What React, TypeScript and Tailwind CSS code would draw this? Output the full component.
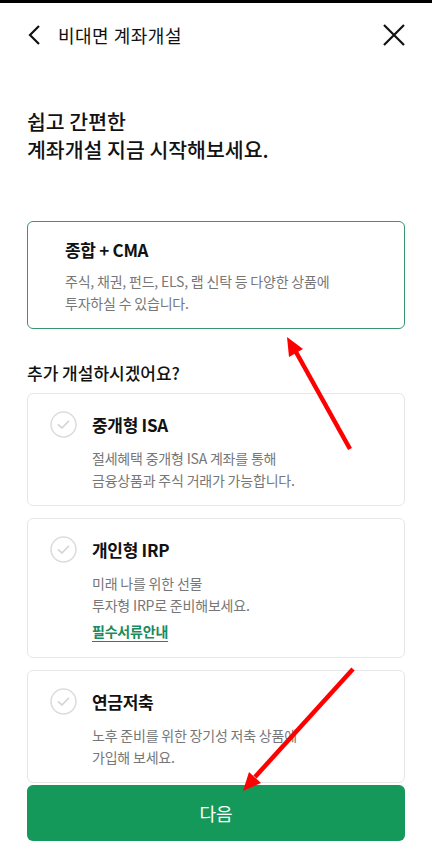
import { useState } from "react";

type Product = {
  title: string;
  desc: string[];
  link?: string;
};

const extras: Product[] = [
  {
    title: "중개형 ISA",
    desc: ["절세혜택 중개형 ISA 계좌를 통해", "금융상품과 주식 거래가 가능합니다."],
  },
  {
    title: "개인형 IRP",
    desc: ["미래 나를 위한 선물", "투자형 IRP로 준비해보세요."],
    link: "필수서류안내",
  },
  {
    title: "연금저축",
    desc: ["노후 준비를 위한 장기성 저축 상품에", "가입해 보세요."],
  },
];

function CheckCircle({ on }: { on: boolean }) {
  return (
    <svg width="27" height="27" viewBox="0 0 27 27" className="shrink-0">
      <circle
        cx="13.5"
        cy="13.5"
        r="12.5"
        fill={on ? "#15995a" : "white"}
        stroke={on ? "#15995a" : "#dcdcdc"}
        strokeWidth="1.5"
      />
      <path
        d="M8.5 13.8 L12 17 L18.5 10.3"
        fill="none"
        stroke={on ? "white" : "#d2d2d2"}
        strokeWidth="1.6"
        strokeLinecap="round"
        strokeLinejoin="round"
      />
    </svg>
  );
}

export default function App() {
  const [picked, setPicked] = useState<string[]>([]);

  const toggle = (t: string) =>
    setPicked((p) => (p.includes(t) ? p.filter((x) => x !== t) : [...p, t]));

  return (
    <div
      className="relative w-full h-[865px] overflow-hidden bg-white text-[#111]"
      style={{ fontFamily: '"Noto Sans CJK KR", "Noto Sans", sans-serif' }}
    >
      <div className="h-[3px] bg-black" />

      {/* header */}
      <div className="flex items-center h-[64px] pl-[26px] pr-[26px]">
        <svg width="16" height="22" viewBox="0 0 16 22" className="shrink-0">
          <path d="M13 2 L4 11 L13 20" fill="none" stroke="#111" strokeWidth="2.2" />
        </svg>
        <span className="ml-[16px] text-[18px] tracking-[0.5px] leading-none">
          비대면 계좌개설
        </span>
        <svg width="24" height="24" viewBox="0 0 24 24" className="ml-auto">
          <path d="M2 2 L22 22 M22 2 L2 22" fill="none" stroke="#111" strokeWidth="2.2" />
        </svg>
      </div>

      <div className="px-[27px]">
        <h1 className="mt-[40px] text-[20.5px] leading-[28px] font-medium">
          쉽고 간편한
          <br />
          계좌개설 지금 시작해보세요.
        </h1>

        {/* main product */}
        <div className="mt-[58px] h-[108px] rounded-[6px] border border-[#3b9470] pl-[37px] pt-[16px]">
          <div className="text-[17px] leading-[24px] font-bold tracking-[-0.3px]">종합 + CMA</div>
          <p className="mt-[8px] text-[14px] leading-[22px] text-[#777] tracking-[-0.2px]">
            주식, 채권, 펀드, ELS, 랩 신탁 등 다양한 상품에
            <br />
            투자하실 수 있습니다.
          </p>
        </div>

        <div className="mt-[32px] text-[17px] leading-[24px] font-medium">추가 개설하시겠어요?</div>

        <div className="mt-[8px] flex flex-col gap-[12px]">
          {extras.map((item) => (
            <button
              key={item.title}
              type="button"
              onClick={() => toggle(item.title)}
              className="text-left rounded-[6px] border border-[#e6e6e6] pl-[22px] pt-[17px] pb-[14px] bg-white"
            >
              <div className="flex items-center gap-[15px] h-[27px]">
                <CheckCircle on={picked.includes(item.title)} />
                <span className="text-[17px] font-bold tracking-[-0.3px]">{item.title}</span>
              </div>
              <div className="pl-[42px] mt-[9px] text-[14px] leading-[22px] text-[#777] tracking-[-0.2px]">
                {item.desc.map((d) => (
                  <div key={d}>{d}</div>
                ))}
                {item.link && (
                  <span className="inline-block mt-[4px] mb-[1px] text-[#1b8a5c] font-bold underline underline-offset-[4px]">
                    {item.link}
                  </span>
                )}
              </div>
            </button>
          ))}
        </div>

        <button
          type="button"
          className="mt-[2px] w-full h-[56px] rounded-[6px] bg-[#15995a] text-white text-[18px]"
        >
          다음
        </button>
      </div>

      {/* annotation arrows */}
      <svg
        className="absolute inset-0 pointer-events-none"
        width="432"
        height="865"
        viewBox="0 0 432 865"
      >
        <line x1="350" y1="449" x2="296" y2="352" stroke="#f00" strokeWidth="4.5" />
        <polygon points="287,337 303,349 289,357" fill="#f00" />
        <line x1="353" y1="669" x2="255" y2="777" stroke="#f00" strokeWidth="4.5" />
        <polygon points="243,791 261,783 249,772" fill="#f00" />
      </svg>
    </div>
  );
}
